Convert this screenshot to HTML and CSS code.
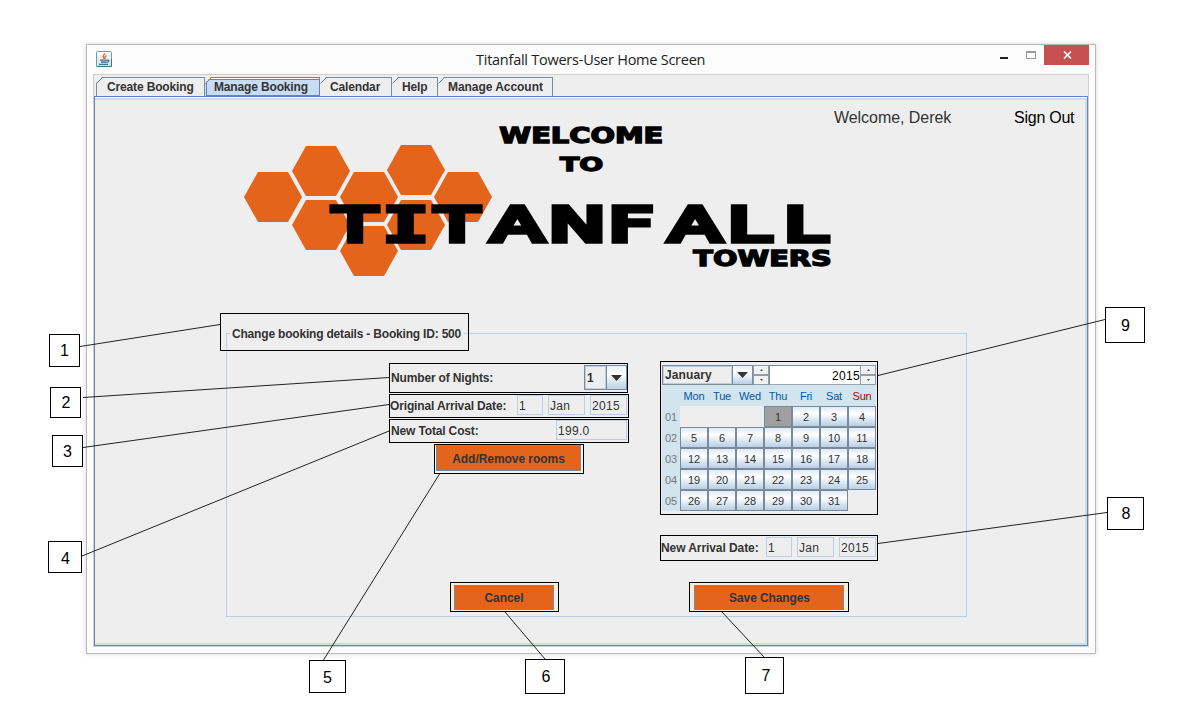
FILE: index.html
```html
<!DOCTYPE html>
<html lang="en">
<head>
<meta charset="utf-8">
<title>Titanfall Towers-User Home Screen</title>
<link rel="stylesheet" href="styles.css">
</head>
<body>
<div class="stage">
  <div class="window">
    <div class="titlebar">
      <svg class="java" width="16" height="16" viewBox="0 0 16 16">
        <defs><linearGradient id="jg" x1="0" y1="0" x2="0" y2="1"><stop offset="0" stop-color="#fff"/><stop offset="1" stop-color="#d3dde4"/></linearGradient></defs>
        <rect x=".5" y=".5" width="15" height="15" rx="1" fill="url(#jg)" stroke="#7795a8"/>
        <path d="M.5 15.5h15V8" fill="none" stroke="#4c6f86"/>
        <path d="M9.300 2.500C6 4.800 7.500 5.500 8 7.800M10.500 4.500C8 5.800 9 6.500 9 8" fill="none" stroke="#e8741c" stroke-width="1.500"/>
        <path d="M4 9.200h7M5 11h5.500M3 13.300h9M11 9.300c3-.5 2 2-.3 2" fill="none" stroke="#42759a" stroke-width="1.300"/>
      </svg>
      <span class="title">Titanfall Towers-User Home Screen</span>
      <div class="controls">
        <span class="min"></span><span class="max"></span>
        <span class="close"><svg width="9" height="8" viewBox="0 0 9 8"><path d="M1 .5l7 7M8 .5l-7 7" stroke="#fff" stroke-width="1.700"/></svg></span>
      </div>
    </div>
    <div class="client">
      <div class="tabs">
        <div class="tab t1"><svg class="corner" width="7" height="7"><path d="M0 0h6L0 6z" fill="#eee"/><path d="M.5 6.500l6-6" stroke="#7a8a99"/></svg>Create Booking</div>
        <div class="tab t2 selected"><svg class="corner" width="7" height="7"><path d="M0 0h6L0 6z" fill="#eee"/><path d="M.5 6.500l6-6" stroke="#6382bf"/></svg><span>Manage Booking</span></div>
        <div class="tab t3"><svg class="corner" width="7" height="7"><path d="M0 0h6L0 6z" fill="#eee"/><path d="M.5 6.500l6-6" stroke="#7a8a99"/></svg>Calendar</div>
        <div class="tab t4"><svg class="corner" width="7" height="7"><path d="M0 0h6L0 6z" fill="#eee"/><path d="M.5 6.500l6-6" stroke="#7a8a99"/></svg>Help</div>
        <div class="tab t5"><svg class="corner" width="7" height="7"><path d="M0 0h6L0 6z" fill="#eee"/><path d="M.5 6.500l6-6" stroke="#7a8a99"/></svg>Manage Account</div>
      </div>
      <div class="panel">
        <div class="header">
          <svg class="logo" width="592" height="160" viewBox="21 15 1776 480">
            <defs><path id="hex" d="M-87 0L-45-75H45L87 0 45 75H-45z" fill="#e4641b"/></defs>
            <use href="#hex" x="114" y="246"/><use href="#hex" x="258" y="168"/><use href="#hex" x="258" y="330"/><use href="#hex" x="402" y="246"/>
            <use href="#hex" x="402" y="408"/><use href="#hex" x="543" y="165"/><use href="#hex" x="543" y="330"/><use href="#hex" x="684" y="246"/>
            <g class="brand">
              <text x="793" y="84" font-size="61" textLength="492" lengthAdjust="spacingAndGlyphs" stroke-width="4">WELCOME</text>
              <text x="975" y="168" font-size="58" textLength="130" lengthAdjust="spacingAndGlyphs" stroke-width="4">TO</text>
              <text class="name" transform="scale(1.65 1)" y="377" font-size="139" stroke-width="16"><tspan x="176.5 268.5 362">TIT</tspan><tspan class="wide" x="466 570">AN</tspan><tspan x="677">F</tspan><tspan class="wide" x="789 896 998">ALL</tspan></text>
              <text x="1375" y="452" font-size="61" textLength="415" lengthAdjust="spacingAndGlyphs" stroke-width="4">TOWERS</text>
            </g>
          </svg>
          <span class="welcome">Welcome, Derek</span>
          <span class="signout">Sign Out</span>
        </div>
        <div class="group">
          <div class="legend">Change booking details - Booking ID: 500</div>
          <div class="columns">
            <div class="left">
              <div class="box nights"><span class="lbl">Number of Nights:</span>
                <div class="combo"><span class="val">1</span><span class="arrow"><svg width="11" height="6"><path d="M0 0h11L5.500 6z" fill="#333"/></svg></span></div></div>
              <div class="box row"><span class="lbl tight">Original Arrival Date:</span><span class="field d">1</span><span class="field m">Jan</span><span class="field m">2015</span></div>
              <div class="box row"><span class="lbl">New Total Cost:</span><span class="field cost">199.0</span></div>
              <div class="box addbox"><div class="btn">Add/Remove rooms</div></div>
            </div>
            <div class="right">
              <div class="box calendar">
                <div class="calbar">
                  <div class="combo month"><span class="val">January</span><span class="arrow"><svg width="11" height="6"><path d="M0 0h11L5.500 6z" fill="#333"/></svg></span></div>
                  <div class="spin"><i><svg width="3" height="2"><path d="M0 2h3L1.500 0z" fill="#555"/></svg></i><i><svg width="3" height="2"><path d="M0 0h3L1.500 2z" fill="#555"/></svg></i></div>
                  <span class="year">2015</span>
                  <div class="spin"><i><svg width="3" height="2"><path d="M0 2h3L1.500 0z" fill="#555"/></svg></i><i><svg width="3" height="2"><path d="M0 0h3L1.500 2z" fill="#555"/></svg></i></div>
                </div>
                <div class="days">
                  <span class="wk"></span><span class="h">Mon</span><span class="h">Tue</span><span class="h">Wed</span><span class="h">Thu</span><span class="h">Fri</span><span class="h">Sat</span><span class="h sun">Sun</span>
                  <span class="wk">01</span><span class="e"></span><span class="e"></span><span class="e"></span><b class="on">1</b><b>2</b><b>3</b><b>4</b>
                  <span class="wk">02</span><b>5</b><b>6</b><b>7</b><b>8</b><b>9</b><b>10</b><b>11</b>
                  <span class="wk">03</span><b>12</b><b>13</b><b>14</b><b>15</b><b>16</b><b>17</b><b>18</b>
                  <span class="wk">04</span><b>19</b><b>20</b><b>21</b><b>22</b><b>23</b><b>24</b><b>25</b>
                  <span class="wk">05</span><b>26</b><b>27</b><b>28</b><b>29</b><b>30</b><b>31</b><span class="e"></span>
                </div>
              </div>
              <div class="box newdate"><span class="lbl">New Arrival Date:</span><span class="field d">1</span><span class="field m">Jan</span><span class="field m">2015</span></div>
            </div>
          </div>
          <div class="actions">
            <div class="box cancelbox"><div class="btn">Cancel</div></div>
            <div class="box savebox"><div class="btn">Save Changes</div></div>
          </div>
        </div>
      </div>
    </div>
  </div>
  <svg class="lines" width="1179" height="716">
    <path d="M80 346.500L220 324.500M83 397.500L389 377.500M83 447.500L389 404.500M82 556L389 431M323.500 660L439.500 474M545 659L505 612M764 657L722 612M1107 512.500L878 543.500M1105 319.500L878 375.500"/>
  </svg>
  <div class="outline"></div>
  <div class="note n1">1</div><div class="note n2">2</div><div class="note n3">3</div><div class="note n4">4</div><div class="note n5">5</div>
  <div class="note n6">6</div><div class="note n7">7</div><div class="note n8">8</div><div class="note n9">9</div>
</div>
</body>
</html>
```
FILE: styles.css
```css
*{box-sizing:border-box}
body{margin:0;background:#fff;font-family:"Liberation Sans",Arial,sans-serif;font-size:12px;color:#333}
.stage{position:relative;width:1179px;height:716px;overflow:hidden;padding:44px 0 0 86px}
.window{width:1010px;height:610px;border:1px solid #bababa;background:#fcfcfc;padding:0 6px 6px;box-shadow:0 0 5px rgba(0,0,0,.16)}
.titlebar{height:29px;display:flex;align-items:flex-start}
.java{margin:6px 0 0 3px}
.title{font-family:"Open Sans","Noto Sans",sans-serif;font-size:14.5px;letter-spacing:-.25px;line-height:20px;margin:5px 0 0 364px;width:400px;color:#222;white-space:nowrap}
.controls{display:flex;margin-left:auto}
.min{width:8px;height:2px;background:#222;margin:12px 18px 0 0}
.max{width:10px;height:8px;border:1px solid #999;border-top-width:2px;margin:6px 8px 0 0}
.close{width:45px;height:20px;background:#c75050;display:flex;align-items:center;justify-content:center;padding-left:1px}
.client{height:573px;border:1px solid #cfcfcf;background:#eee;padding-top:2px;display:flex;flex-direction:column}
.tabs{display:flex;height:19px;padding-left:2px;font-weight:bold;letter-spacing:-.15px;line-height:19px}
.tab{position:relative;height:19px;border-top:1px solid #7a8a99;border-right:1px solid #7a8a99;padding-left:10px;white-space:nowrap}
.corner{position:absolute;left:0;top:-1px}
.t1{width:109px;border-left:1px solid #7a8a99}
.t1 .corner{left:-1px}
.t2{width:115px;padding:1px 0 0 1px}
.t3{width:72px}.t4{width:46px}.t5{width:115px;letter-spacing:-.05px}
.selected{background:#c8ddf2;border-color:#6382bf;box-shadow:inset 0 1px #fff}
.selected span{display:block;height:17px;line-height:15px;border:1px solid #6382bf;padding-left:7px;border-right:0}
.panel{flex:1;border:1px solid #6382bf;border-bottom-color:#6f88a5;border-right-color:#6f88a5;box-shadow:inset 0 1px #fff,inset 0 3px #c8ddf2,inset -2px -2px #c8ddf2}
.header{display:flex;height:183px;padding:23px 0 0 147px;font-size:16px;line-height:18px}
.logo{flex:none}
.brand{font-family:"DejaVu Sans",sans-serif;font-weight:bold;fill:#000;stroke:#000}
.brand .name{font-family:"DejaVu Sans Mono",monospace;font-weight:normal;stroke-miterlimit:1.8}
.brand .wide{font-family:"DejaVu Sans",sans-serif}
.welcome{width:180px;margin-top:-11px;letter-spacing:-.05px}
.signout{color:#000;margin-top:-11px;letter-spacing:-.25px}
.group{width:741px;height:284px;margin:53px 0 0 131px;border:1px solid #b8cfe5;font-weight:bold}
.legend{width:max-content;margin:-9px 0 0 3px;padding:0 3px 0 2px;line-height:18px;background:#eee;letter-spacing:-.19px}
.columns{display:flex;padding:18px 0 0 162px}
.left{width:271px;padding-top:2px;display:flex;flex-direction:column}
.box{border:1px solid #000;display:flex}
.lbl{flex:1;padding-left:1px;white-space:nowrap;letter-spacing:-.15px}
.tight{padding-left:0}
.nights{width:239px;height:30px;line-height:27px;padding:1px 0 0}
.row{width:240px;height:24px;line-height:22px;margin-top:1px;padding-right:1px}
.field{height:20px;border:1px solid #b8cfe5;font-weight:normal;line-height:20px;padding-left:1px;letter-spacing:.3px;margin-left:5px}
.d{width:26px}.m{width:37px}.cost{width:71px}
.combo{display:flex;width:43px;height:25px;border:1px solid #7a8a99;line-height:23px}
.combo .val{flex:1;padding-left:1px;border:1px solid #b8cfe5;line-height:22px}
.arrow{width:20px;border-left:1px solid #7a8a99;display:flex;align-items:center;justify-content:center;background:linear-gradient(#e8f0f8,#fff 35%,#b8cfe5)}
.addbox{width:150px;height:30px;margin:1px 0 0 45px;padding:0 0 0 1px;background:#f5f5f0}
.btn{height:26px;width:145px;background:#e4641b;border:1px solid #7a8a99;text-align:center;line-height:26px;letter-spacing:-.05px}
.right{width:218px}
.calendar{height:154px;padding:3px 0 0 1px;flex-direction:column}
.calbar{display:flex;height:20px}
.month{width:91px;height:20px}
.month .val{line-height:17px;padding-left:1px;letter-spacing:.1px}
.spin{width:16px;display:flex;flex-direction:column}
.spin i{flex:1;border:1px solid #8f9ca9;background:#f1f1f1;display:flex;align-items:center;justify-content:center}
.year{width:91px;background:#fff;font-weight:normal;text-align:right;line-height:20px;color:#000;border:1px solid #7a8a99;border-right:0;border-bottom-color:#9aa6b2;letter-spacing:.3px}
.days{display:grid;grid-template-columns:18px repeat(7,28px);grid-auto-rows:21px;width:214px;background:#d2e4ee;font-size:11px;font-weight:normal;text-align:center;line-height:22px}
.days b{font-weight:normal;border:1px solid #7a8a99;background:linear-gradient(#dfe9f4,#fff 35%,#b8cfe5);line-height:20px}
.days .on{background:#a0a0a0}
.h{color:#0058a8;letter-spacing:-.2px}.sun{color:#b00000}.wk{color:#777}.e{background:#eee}
.newdate{height:26px;margin-top:20px;padding:1px 1px 0 0;line-height:22px}
.newdate .lbl{padding-left:0;letter-spacing:-.08px}
.actions{display:flex;padding:21px 0 0 223px}
.cancelbox{width:109px;height:30px;padding:2px 0 0 3px}
.cancelbox .btn{width:100px;height:25px;line-height:24px}
.savebox{width:160px;height:30px;padding:2px 0 0 4px;margin-left:130px}
.savebox .btn{width:150px;height:25px;line-height:24px;padding-left:1px;letter-spacing:-.1px}
.lines{position:absolute;left:0;top:0}
.lines path{stroke:#222;stroke-width:1;fill:none}
.outline{position:absolute;left:220px;top:313px;width:249px;height:38px;border:1px solid #000}
.note{position:absolute;background:#fff;border:1px solid #000;color:#000;font-size:16px;display:flex;align-items:center;justify-content:center;padding:1px 0 0 1px}
.n1{left:49px;top:334px;width:31px;height:33px;padding:0}
.n2{left:50px;top:387px;width:31px;height:31px}
.n3{left:52px;top:435px;width:31px;height:32px;padding-left:0}
.n4{left:48px;top:541px;width:34px;height:32px;padding-top:3px}
.n5{left:309px;top:660px;width:37px;height:33px;padding-left:0;padding-top:2px}
.n6{left:525px;top:659px;width:40px;height:35px;padding-left:2px;padding-top:0}
.n7{left:745px;top:657px;width:39px;height:37px;padding-left:3px;padding-top:0}
.n8{left:1107px;top:497px;width:37px;height:33px;padding-top:0}
.n9{left:1105px;top:307px;width:40px;height:36px}
```
